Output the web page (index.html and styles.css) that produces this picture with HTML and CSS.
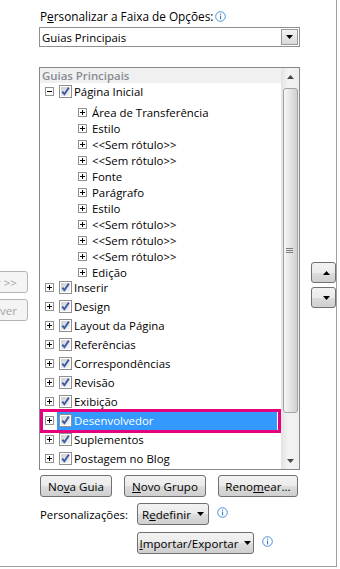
FILE: index.html
```html
<!DOCTYPE html>
<html lang="pt">

<head>
    <meta charset="utf-8">
    <meta name="viewport" content="width=device-width, initial-scale=1.0">
    <title>Personalizar a Faixa de Opções</title>

    <link rel="stylesheet" href="styles.css">
</head>

<body>

    <!-- simbolos reaproveitados -->
    <svg class="defs" width="0" height="0">
        <symbol id="mais" viewBox="0 0 9 9">
            <rect x="0.5" y="0.5" width="8" height="8" fill="#fff" stroke="#919191" />
            <rect x="2" y="4" width="5" height="1" fill="#000" />
            <rect x="4" y="2" width="1" height="5" fill="#000" />
        </symbol>
        <symbol id="menos" viewBox="0 0 9 9">
            <rect x="0.5" y="0.5" width="8" height="8" fill="#fff" stroke="#919191" />
            <rect x="2" y="4" width="5" height="1" fill="#000" />
        </symbol>
        <symbol id="marca" viewBox="0 0 13 13">
            <defs>
                <linearGradient id="fundo" x1="0" y1="0" x2="1" y2="1">
                    <stop offset="0" stop-color="#cfcfcf" />
                    <stop offset="1" stop-color="#f7f7f7" />
                </linearGradient>
            </defs>
            <rect x="0.5" y="0.5" width="12" height="12" fill="#fff" stroke="#8f8f8f" />
            <rect x="2" y="2" width="9" height="9" fill="url(#fundo)" />
            <path d="M3.3 6.6 L5.4 9.2 L9.8 2.6" fill="none" stroke="#3d5aa8" stroke-width="1.9" />
        </symbol>
        <symbol id="info" viewBox="0 0 11 11">
            <circle cx="5.5" cy="5.5" r="4.8" fill="#fff" stroke="#4e8ed8" />
            <rect x="5" y="2.6" width="1.1" height="1.1" fill="#3a78c6" />
            <rect x="5" y="4.6" width="1.1" height="3.8" fill="#3a78c6" />
        </symbol>
        <symbol id="baixo" viewBox="0 0 7 4">
            <path d="M0 0 H7 L3.5 4 Z" fill="#000" />
        </symbol>
        <symbol id="cima" viewBox="0 0 7 4">
            <path d="M0 4 H7 L3.5 0 Z" fill="#000" />
        </symbol>
    </svg>

    <div class="janela">
        <div class="topo">
            <p class="rotulo">P<u>e</u>rsonalizar a Faixa de Opções:<svg class="info"><use href="#info" /></svg></p>
            <div class="combo">
                <span>Guias Principais</span>
                <span class="combo-seta"><svg class="tri"><use href="#baixo" /></svg></span>
            </div>
        </div>

        <div class="meio">
            <div class="lado-esq">
                <button class="btn desligado">Adicionar &gt;&gt;</button>
                <button class="btn desligado">&lt;&lt; Remover</button>
            </div>

            <div class="lista">
                <div class="arvore">
                    <div class="cabeca">Guias Principais</div>
                    <div class="linha"><svg class="exp"><use href="#menos" /></svg><svg class="chk"><use href="#marca" /></svg><span>Página Inicial</span></div>
                    <div class="filhos">
                        <div class="filho"><svg class="exp"><use href="#mais" /></svg><span>Área de Transferência</span></div>
                        <div class="filho"><svg class="exp"><use href="#mais" /></svg><span>Estilo</span></div>
                        <div class="filho"><svg class="exp"><use href="#mais" /></svg><span>&lt;&lt;Sem rótulo&gt;&gt;</span></div>
                        <div class="filho"><svg class="exp"><use href="#mais" /></svg><span>&lt;&lt;Sem rótulo&gt;&gt;</span></div>
                        <div class="filho"><svg class="exp"><use href="#mais" /></svg><span>Fonte</span></div>
                        <div class="filho"><svg class="exp"><use href="#mais" /></svg><span>Parágrafo</span></div>
                        <div class="filho"><svg class="exp"><use href="#mais" /></svg><span>Estilo</span></div>
                        <div class="filho"><svg class="exp"><use href="#mais" /></svg><span>&lt;&lt;Sem rótulo&gt;&gt;</span></div>
                        <div class="filho"><svg class="exp"><use href="#mais" /></svg><span>&lt;&lt;Sem rótulo&gt;&gt;</span></div>
                        <div class="filho"><svg class="exp"><use href="#mais" /></svg><span>&lt;&lt;Sem rótulo&gt;&gt;</span></div>
                        <div class="filho"><svg class="exp"><use href="#mais" /></svg><span>Edição</span></div>
                    </div>
                    <div class="linha"><svg class="exp"><use href="#mais" /></svg><svg class="chk"><use href="#marca" /></svg><span>Inserir</span></div>
                    <div class="linha"><svg class="exp"><use href="#mais" /></svg><svg class="chk"><use href="#marca" /></svg><span>Design</span></div>
                    <div class="linha"><svg class="exp"><use href="#mais" /></svg><svg class="chk"><use href="#marca" /></svg><span>Layout da Página</span></div>
                    <div class="linha"><svg class="exp"><use href="#mais" /></svg><svg class="chk"><use href="#marca" /></svg><span>Referências</span></div>
                    <div class="linha"><svg class="exp"><use href="#mais" /></svg><svg class="chk"><use href="#marca" /></svg><span>Correspondências</span></div>
                    <div class="linha"><svg class="exp"><use href="#mais" /></svg><svg class="chk"><use href="#marca" /></svg><span>Revisão</span></div>
                    <div class="linha"><svg class="exp"><use href="#mais" /></svg><svg class="chk"><use href="#marca" /></svg><span>Exibição</span></div>
                    <div class="linha valgt"><svg class="exp"><use href="#mais" /></svg><span class="marcado"><svg class="chk"><use href="#marca" /></svg><span>Desenvolvedor</span></span></div>
                    <div class="linha"><svg class="exp"><use href="#mais" /></svg><svg class="chk"><use href="#marca" /></svg><span>Suplementos</span></div>
                    <div class="linha"><svg class="exp"><use href="#mais" /></svg><svg class="chk"><use href="#marca" /></svg><span>Postagem no Blog</span></div>
                </div>

                <div class="rolagem">
                    <div class="rol-seta"><svg class="tri"><use href="#cima" /></svg></div>
                    <div class="polegar"><span class="garra"></span></div>
                    <div class="rol-seta fim"><svg class="tri"><use href="#baixo" /></svg></div>
                </div>
            </div>

            <div class="lado-dir">
                <button class="btn mover"><svg class="tri"><use href="#cima" /></svg></button>
                <button class="btn mover"><svg class="tri"><use href="#baixo" /></svg></button>
            </div>
        </div>

        <div class="botoes">
            <button class="btn b-nova">No<u>v</u>a Guia</button>
            <button class="btn b-grupo"><u>N</u>ovo Grupo</button>
            <button class="btn b-renomear">Reno<u>m</u>ear...</button>
        </div>

        <div class="personal">
            <span class="personal-txt">Personalizações:</span>
            <button class="btn b-redefinir">R<u>e</u>definir<svg class="tri"><use href="#baixo" /></svg></button>
            <svg class="info"><use href="#info" /></svg>
        </div>
        <div class="personal">
            <span class="personal-txt"></span>
            <button class="btn b-importar"><u>I</u>mportar/Exportar<svg class="tri"><use href="#baixo" /></svg></button>
            <svg class="info"><use href="#info" /></svg>
        </div>
    </div>

</body>

</html>
```

FILE: styles.css
```css
body {
    margin: 0;
    background-color: #fff;
    color: #000;
    font-family: "Open Sans", "Noto Sans", sans-serif;
    font-size: 11.4px;
}

.defs {
    position: absolute;
}

u {
    text-decoration-thickness: 1px;
    text-underline-offset: 1px;
}

.janela {
    box-sizing: border-box;
    width: 337px;
    height: 567px;
    border-right: 1px solid #a0a0a0;
    border-bottom: 1px solid #a0a0a0;
}

.topo {
    padding: 9px 0 0 39px;
}

.rotulo {
    margin: 0 0 0 1px;
    height: 15px;
    line-height: 15px;
    font-size: 11.8px;
    display: flex;
    align-items: center;
}

.info {
    width: 11px;
    height: 11px;
    margin-left: 2px;
}

.combo {
    box-sizing: border-box;
    margin-top: 3px;
    width: 261px;
    height: 20px;
    border: 1px solid #8e8f8f;
    display: flex;
    align-items: center;
    padding-left: 2px;
}

.combo-seta {
    box-sizing: border-box;
    margin-left: auto;
    width: 17px;
    height: 16px;
    margin-right: 1px;
    border: 1px solid #9a9a9a;
    background: linear-gradient(#f3f3f3, #d9d9d9);
    display: flex;
    align-items: center;
    justify-content: center;
}

.tri {
    width: 7px;
    height: 4px;
}

.meio {
    display: flex;
    margin-top: 20px;
}

.lado-esq {
    box-sizing: border-box;
    width: 39px;
    overflow: hidden;
    display: flex;
    flex-direction: column;
    align-items: flex-end;
    padding: 204px 11px 0 0;
    gap: 6px;
}

.btn {
    box-sizing: border-box;
    height: 22px;
    padding: 0;
    border: 1px solid #707070;
    border-radius: 3px;
    background: linear-gradient(#f2f2f2 0%, #ebebeb 50%, #dddddd 51%, #cfcfcf 100%);
    font-family: inherit;
    font-size: 11.6px;
    color: #000;
    display: flex;
    align-items: center;
    justify-content: center;
}

.desligado {
    flex-shrink: 0;
    width: 90px;
    justify-content: flex-end;
    padding-right: 10px;
    color: #a3a3a3;
    border-color: #b5b5b5;
    background: #f4f4f4;
}

.lista {
    box-sizing: border-box;
    width: 261px;
    height: 403px;
    border: 1px solid #828790;
    display: flex;
}

.arvore {
    flex: 1;
}

.cabeca {
    height: 15px;
    line-height: 15px;
    padding-left: 2px;
    background-color: #f0f0f0;
    color: #868c94;
    font-weight: 600;
}

.linha,
.filho {
    position: relative;
    height: 19px;
    display: flex;
    align-items: center;
}

.linha {
    top: -1px;
}

.exp {
    width: 9px;
    height: 9px;
    margin-left: 5px;
    flex-shrink: 0;
}

.chk {
    width: 13px;
    height: 13px;
    margin: 0 2px 0 5px;
    flex-shrink: 0;
}

.filhos {
    margin: 2px 0 -1px;
}

.filho {
    height: 16px;
}

.filho .exp {
    margin-left: 38px;
    margin-right: 5px;
}

.valgt::after {
    content: "";
    position: absolute;
    left: 0;
    right: 0;
    top: -2px;
    bottom: -3px;
    border: 3px solid #e6007e;
}

.marcado {
    display: flex;
    align-items: center;
    height: 18px;
    width: 220px;
    margin-left: 3px;
    background-color: #3399ff;
    color: #fff;
}

.marcado .chk {
    margin-left: 2px;
}

.rolagem {
    width: 18px;
    display: flex;
    flex-direction: column;
    background: linear-gradient(to right, #e3e3e3, #f3f3f3 40%, #eeeeee);
}

.rol-seta {
    height: 17px;
    display: flex;
    align-items: center;
    justify-content: center;
}

.rol-seta .tri {
    opacity: 0.7;
}

.fim {
    margin-top: auto;
}

.polegar {
    box-sizing: border-box;
    margin: 3px 1px 0 2px;
    height: 325px;
    border: 1px solid #a2a2a2;
    border-radius: 3px;
    background: linear-gradient(to right, #f6f6f6, #e4e4e4 50%, #cfcfcf);
    display: flex;
    justify-content: center;
    align-items: center;
}

.garra {
    width: 7px;
    height: 5px;
    margin-right: 2px;
    background: repeating-linear-gradient(#7c7c7c 0 1px, transparent 1px 2px);
}

.lado-dir {
    flex: 1;
    display: flex;
    flex-direction: column;
    align-items: flex-end;
    padding-top: 195px;
    gap: 4px;
}

.mover {
    width: 25px;
    height: 21px;
}

.botoes {
    display: flex;
    gap: 12px;
    padding-left: 40px;
    margin-top: 5px;
}

.b-nova {
    width: 72px;
}

.b-grupo {
    width: 82px;
}

.b-renomear {
    width: 80px;
}

.personal {
    display: flex;
    align-items: center;
    padding-left: 40px;
    margin-top: 6px;
}

.personal + .personal {
    margin-top: 7px;
}

.personal-txt {
    width: 97px;
}

.b-redefinir {
    width: 72px;
}

.b-importar {
    width: 117px;
}

.btn .tri {
    margin-left: 6px;
}

.personal .info {
    margin: -4px 0 0 8px;
}
```
